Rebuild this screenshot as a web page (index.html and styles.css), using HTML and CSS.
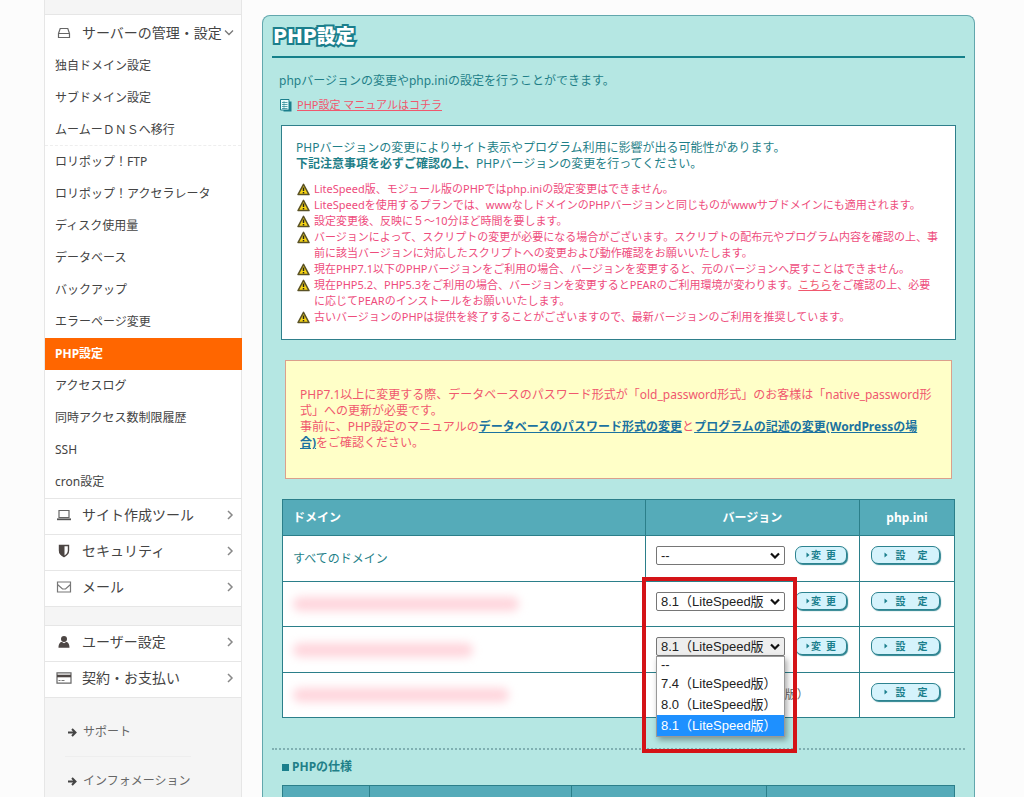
FILE: index.html
```html
<!DOCTYPE html>
<html lang="ja">
<head>
<meta charset="utf-8">
<title>PHP設定</title>
<link rel="stylesheet" href="styles.css">
</head>
<body>
<svg class="defs" aria-hidden="true">
  <symbol id="chev-right" viewBox="0 0 8 10"><path d="M2 1l4 4-4 4" fill="none" stroke="#888" stroke-width="1.5"/></symbol>
  <symbol id="chev-down" viewBox="0 0 10 7"><path d="M1 1.5l4 4 4-4" fill="none" stroke="currentColor" stroke-width="2.2"/></symbol>
  <symbol id="warn" viewBox="0 0 13 13"><path d="M6.5 1.4L12 11.6H1z" fill="#f7d514" stroke="#5a5226" stroke-width="1.5" stroke-linejoin="round"/><path d="M6.5 4.5v3.5" stroke="#222" stroke-width="1.5"/><path d="M6.5 9v1.4" stroke="#222" stroke-width="1.5"/></symbol>
  <symbol id="arrow" viewBox="0 0 9 9"><path d="M0 4.5h7M4 1l3.5 3.5L4 8" fill="none" stroke="#444" stroke-width="2"/></symbol>
  <symbol id="tri" viewBox="0 0 4 6"><path d="M0.5 0.5v5L3.5 3z" fill="#1b7f8c"/></symbol>
</svg>
<div class="layout">
  <nav class="side">
    <section class="group">
      <a class="head open" href="#"><svg class="ico" viewBox="0 0 16 14"><path d="M2.5 7.5L4.2 2.5h7.6l1.7 5v4h-11zM2.5 7.5h11" fill="none" stroke="#666" stroke-width="1.2"/></svg><span class="label">サーバーの管理・設定</span><svg class="down" viewBox="0 0 10 7"><path d="M1 1.5l4 4 4-4" fill="none" stroke="#777" stroke-width="1.3"/></svg></a>
      <ul class="sub">
        <li><a href="#">独自ドメイン設定</a></li>
        <li><a href="#">サブドメイン設定</a></li>
        <li><a href="#">ムームーＤＮＳへ移行</a></li>
        <li class="split"><a href="#">ロリポップ！FTP</a></li>
        <li><a href="#">ロリポップ！アクセラレータ</a></li>
        <li><a href="#">ディスク使用量</a></li>
        <li><a href="#">データベース</a></li>
        <li><a href="#">バックアップ</a></li>
        <li><a href="#">エラーページ変更</a></li>
        <li class="active"><a href="#">PHP設定</a></li>
        <li><a href="#">アクセスログ</a></li>
        <li><a href="#">同時アクセス数制限履歴</a></li>
        <li><a href="#">SSH</a></li>
        <li><a href="#">cron設定</a></li>
      </ul>
      <a class="head" href="#"><svg class="ico" viewBox="0 0 16 14"><path d="M3 2.5h10v7H3z" fill="none" stroke="#666" stroke-width="1.2"/><path d="M1 11.3h14" stroke="#555" stroke-width="1.8"/></svg><span class="label">サイト作成ツール</span><svg class="more"><use href="#chev-right"/></svg></a>
      <a class="head" href="#"><svg class="ico" viewBox="0 0 16 14"><path d="M3.5 1.5h9v5c0 3-2 4.8-4.5 6-2.5-1.2-4.5-3-4.5-6z" fill="#fff" stroke="#4d4644" stroke-width="1.4"/><path d="M3 1h5.5v12C5 11.5 3 9.5 3 6.5z" fill="#4d4644"/></svg><span class="label">セキュリティ</span><svg class="more"><use href="#chev-right"/></svg></a>
      <a class="head" href="#"><svg class="ico" viewBox="0 0 16 14"><path d="M1.5 2h13v10h-13zM1.5 4.5L6.500 9h3l5-4.5" fill="none" stroke="#777" stroke-width="1.2"/></svg><span class="label">メール</span><svg class="more"><use href="#chev-right"/></svg></a>
    </section>
    <section class="group">
      <a class="head" href="#"><svg class="ico" viewBox="0 0 16 14"><circle cx="8" cy="4" r="3" fill="#4d4644"/><path d="M2.5 12.8c0-4 1.5-5.8 3.5-5.8l2 1.2L10 7c2 0 3.5 1.8 3.5 5.8z" fill="#4d4644"/></svg><span class="label">ユーザー設定</span><svg class="more"><use href="#chev-right"/></svg></a>
      <a class="head" href="#"><svg class="ico" viewBox="0 0 16 14"><path d="M1 1.8h14v10.4H1z" fill="none" stroke="#666" stroke-width="1.2"/><path d="M1 5h14" stroke="#4d4644" stroke-width="2.6"/><path d="M2.5 9.5h2M5.5 9.5h3" stroke="#777"/></svg><span class="label">契約・お支払い</span><svg class="more"><use href="#chev-right"/></svg></a>
    </section>
    <ul class="extra">
      <li><a href="#"><svg><use href="#arrow"/></svg>サポート</a></li>
      <li><a href="#"><svg><use href="#arrow"/></svg>インフォメーション</a></li>
    </ul>
  </nav>

  <main class="panel">
    <h1>PHP設定</h1>
    <p class="intro">phpバージョンの変更やphp.iniの設定を行うことができます。</p>
    <p class="manual"><svg viewBox="0 0 12 13"><path d="M3.5 2.5h8v10h-8z" fill="#1b7f8c"/><path d="M.5.5h8.5v10.5H.5z" fill="#e9fbfb" stroke="#1b7f8c"/><path d="M2 3.5h5.5M2 5.5h5.5M2 7.5h5.5M2 9.5h5.5" stroke="#1b7f8c" stroke-width=".7"/><path d="M4 2v8" stroke="#1b7f8c" stroke-width=".5"/></svg><a href="#">PHP設定 マニュアルはコチラ</a></p>

    <section class="notice">
      <p>PHPバージョンの変更によりサイト表示やプログラム利用に影響が出る可能性があります。<br><strong>下記注意事項を必ずご確認の上、</strong>PHPバージョンの変更を行ってください。</p>
      <ul>
        <li><svg><use href="#warn"/></svg><span>LiteSpeed版、モジュール版のPHPではphp.iniの設定変更はできません。</span></li>
        <li><svg><use href="#warn"/></svg><span>LiteSpeedを使用するプランでは、wwwなしドメインのPHPバージョンと同じものがwwwサブドメインにも適用されます。</span></li>
        <li><svg><use href="#warn"/></svg><span>設定変更後、反映に５～10分ほど時間を要します。</span></li>
        <li><svg><use href="#warn"/></svg><span>バージョンによって、スクリプトの変更が必要になる場合がございます。スクリプトの配布元やプログラム内容を確認の上、事前に該当バージョンに対応したスクリプトへの変更および動作確認をお願いいたします。</span></li>
        <li><svg><use href="#warn"/></svg><span>現在PHP7.1以下のPHPバージョンをご利用の場合、バージョンを変更すると、元のバージョンへ戻すことはできません。</span></li>
        <li><svg><use href="#warn"/></svg><span>現在PHP5.2、PHP5.3をご利用の場合、バージョンを変更するとPEARのご利用環境が変わります。<a href="#">こちら</a>をご確認の上、必要に応じてPEARのインストールをお願いいたします。</span></li>
        <li><svg><use href="#warn"/></svg><span>古いバージョンのPHPは提供を終了することがございますので、最新バージョンのご利用を推奨しています。</span></li>
      </ul>
    </section>

    <p class="caution">PHP7.1以上に変更する際、データベースのパスワード形式が「old_password形式」のお客様は「native_password形式」への更新が必要です。<br>事前に、PHP設定のマニュアルの<a href="#">データベースのパスワード形式の変更</a>と<a href="#">プログラムの記述の変更(WordPressの場<br>合)</a>をご確認ください。</p>

    <table class="domains">
      <thead>
        <tr><th class="name">ドメイン</th><th class="ver">バージョン</th><th class="ini">php.ini</th></tr>
      </thead>
      <tbody>
        <tr>
          <td>すべてのドメイン</td>
          <td class="ctl"><div class="row"><div class="pick"><select aria-label="すべてのドメインのバージョン"><option>--</option></select><svg><use href="#chev-down"/></svg></div><button class="btn" type="button"><svg><use href="#tri"/></svg><span>変</span><span>更</span></button></div></td>
          <td class="ctl"><button class="btn wide" type="button"><svg><use href="#tri"/></svg><span>設</span><span>定</span></button></td>
        </tr>
        <tr>
          <td><span class="masked long"></span></td>
          <td class="ctl"><div class="row"><div class="pick"><select aria-label="バージョン"><option>8.1（LiteSpeed版）</option></select><svg><use href="#chev-down"/></svg><div class="frame"></div></div><button class="btn" type="button"><svg><use href="#tri"/></svg><span>変</span><span>更</span></button></div></td>
          <td class="ctl"><button class="btn wide" type="button"><svg><use href="#tri"/></svg><span>設</span><span>定</span></button></td>
        </tr>
        <tr>
          <td><span class="masked short"></span></td>
          <td class="ctl"><div class="row"><div class="pick expanded"><select aria-label="バージョン"><option>8.1（LiteSpeed版）</option></select><svg><use href="#chev-down"/></svg>
            <ul class="menu" role="listbox" aria-label="バージョン一覧"><li role="option">--</li><li role="option">7.4（LiteSpeed版）</li><li role="option">8.0（LiteSpeed版）</li><li role="option" aria-selected="true">8.1（LiteSpeed版）</li></ul></div><button class="btn" type="button"><svg><use href="#tri"/></svg><span>変</span><span>更</span></button></div></td>
          <td class="ctl"><button class="btn wide" type="button"><svg><use href="#tri"/></svg><span>設</span><span>定</span></button></td>
        </tr>
        <tr>
          <td><span class="masked mid"></span></td>
          <td class="fixed">8.1（LiteSpeed版）</td>
          <td class="ctl"><button class="btn wide" type="button"><svg><use href="#tri"/></svg><span>設</span><span>定</span></button></td>
        </tr>
      </tbody>
    </table>

    <hr>
    <h2>PHPの仕様</h2>
    <table class="spec">
      <colgroup><col class="c1"><col class="c2"><col class="c3"><col class="c4"></colgroup>
      <thead><tr><th></th><th></th><th></th><th></th></tr></thead>
    </table>
  </main>
</div>
</body>
</html>
```
FILE: styles.css
```css
* { box-sizing: border-box; }
body {
  margin: 0;
  background: #fcfcfc;
  color: #444;
  font: 12px/16px "Noto Sans", "Noto Sans CJK JP", sans-serif;
}
p, h1, h2, ul { margin: 0; padding: 0; }
ul { list-style: none; }
.defs { position: absolute; width: 0; height: 0; }
.layout {
  display: flex;
  gap: 20px;
  min-height: 100vh;
  padding: 0 49px 0 44px;
}

/* sidebar */
.side {
  flex: 0 0 198px;
  padding-top: 14px;
  background: #f5f5f5;
  border: solid #e6e6e6;
  border-width: 0 1px;
}
.side a { color: #444; text-decoration: none; }
.group { margin-bottom: 18px; background: #fff; border-top: 1px solid #e6e6e6; }
.group + .group { margin-bottom: 0; }
.head {
  display: flex;
  align-items: center;
  height: 36px;
  padding: 0 7px 3px 11px;
  border-bottom: 1px solid #e6e6e6;
  font-size: 14px;
}
.head.open { height: 35px; padding-bottom: 0; border: 0; }
.ico { width: 16px; height: 14px; margin-right: 10px; }
.label { flex: 1; white-space: nowrap; }
.more { width: 8px; height: 10px; }
.down { width: 10px; height: 7px; }
.sub { border-bottom: 1px solid #e6e6e6; }
.sub a { display: block; padding-left: 10px; line-height: 32px; }
.sub .split { border-top: 1px dashed #eee; margin-top: -1px; }
.sub .active { margin-right: -1px; background: #f60; }
.sub .active a { color: #fff; font-weight: bold; }
.extra { margin: 0 50px 0 20px; padding-top: 10px; }
.extra li { padding: 16px 0; }
.extra li + li { border-top: 1px solid #eee; }
.extra a { display: flex; align-items: center; gap: 6px; color: #666; white-space: nowrap; }
.extra svg { width: 9px; height: 9px; margin-left: 3px; }

/* content panel */
.panel {
  flex: 1;
  min-width: 0;
  margin-top: 15px;
  padding: 0 9px 30px;
  background: #b5e7e3;
  border: 1px solid #62a7ad;
  border-bottom: 0;
  border-radius: 8px 8px 0 0;
  color: #1f7f88;
}
h1 {
  padding: 10px 1px;
  border-bottom: 2px solid #14808a;
  color: #fff;
  font: 900 19px/20px "DejaVu Sans", "Noto Sans CJK JP", sans-serif;
  -webkit-text-stroke: 4px #1b7f8c;
  paint-order: stroke fill;
  stroke-linejoin: round;
}
.intro { margin: 15px 7px 8px; }
.manual { display: flex; align-items: center; gap: 5px; margin: 0 8px 12px; font-size: 11px; }
.manual svg { width: 12px; height: 13px; }
.panel a { color: #f0586e; }

.notice {
  margin: 0 9px 20px;
  padding: 14px 14px 14px;
  background: #fff;
  border: 1px solid #2f7f8b;
}
.notice ul { margin-top: 9px; color: #ee4c7c; font-size: 11px; }
.notice li { display: flex; gap: 4px; }
.notice svg { flex: none; width: 13px; height: 13px; margin: 2px 0 0 1px; }

.panel .caution {
  margin: 0 13px 20px;
  padding: 26px 14px 27px;
  background: #ffffc8;
  border: 1px solid #dba08c;
  color: #f0586e;
}
.caution a { color: #1b72a0; font-weight: bold; }

/* tables */
table { width: calc(100% - 20px); margin: 0 10px; border-collapse: collapse; table-layout: fixed; }
th, td { border: 1px solid #2b7f8a; }
th { height: 36px; padding: 0 10px; background: #55abb9; color: #fff; font-weight: bold; }
.name { text-align: left; }
.ver { width: 214px; }
.ini { width: 95px; }
td { height: 45px; padding: 0 10px; background: #fff; }
tbody tr:nth-child(odd) td { height: 46px; }
.ctl { padding-top: 10px; vertical-align: top; }
.fixed { padding-left: 14px; text-align: center; color: #666; }
.row { display: flex; gap: 10px; }
.masked { display: block; height: 14px; background: #ffd5dc; border-radius: 7px; filter: blur(5px); }
.long { width: 226px; }
.short { width: 180px; }
.mid { width: 216px; }

.pick { position: relative; width: 129px; height: 19px; }
.pick select {
  display: block;
  width: 100%;
  height: 19px;
  padding: 0 20px 0 4px;
  appearance: none;
  background: #fff;
  border: 1px solid #767676;
  border-radius: 2px;
  color: #222;
  font: 13px/17px "Liberation Sans", "Noto Sans CJK JP", sans-serif;
}
.pick.expanded select { background: #eee; }
.pick > svg { position: absolute; top: 6px; right: 5px; width: 10px; height: 7px; color: #111; pointer-events: none; }
.menu {
  position: absolute;
  z-index: 2;
  top: 19px;
  left: 0;
  width: 129px;
  background: #fff;
  border: 1px solid #999;
  box-shadow: 2px 3px 6px rgba(0, 0, 0, .35);
  color: #222;
  font: 13px/21px "Liberation Sans", "Noto Sans CJK JP", sans-serif;
}
.menu li { padding-left: 4px; white-space: nowrap; }
.menu li:first-child { line-height: 16px; }
.menu [aria-selected] { background: #1e90ff; color: #fff; }
.frame {
  position: absolute;
  z-index: 3;
  top: -15px;
  left: -14px;
  width: 155px;
  height: 176px;
  border: 4px solid #d41317;
  pointer-events: none;
}

.btn {
  display: flex;
  align-items: center;
  justify-content: center;
  gap: 5px;
  width: 52px;
  height: 18px;
  padding: 0;
  background: #d5f3fc;
  border: 1px solid #2c8390;
  border-radius: 7px;
  box-shadow: 1px 1px 1px #2c8390;
  color: #1b7f8c;
  font: bold 10px/16px "Noto Sans CJK JP", sans-serif;
}
.btn svg { width: 4px; height: 6px; margin-right: -4px; }
.btn.wide { gap: 12px; width: 69px; margin-left: 1px; }

hr { margin: 30px 0 9px; border: 0; border-top: 2px dotted #7fb0b2; }
h2 { display: flex; align-items: center; gap: 3px; margin: 0 10px 10px; font-size: 12px; line-height: 16px; }
h2::before { content: ""; width: 7px; height: 7px; background: #1b7f8c; }
.c1 { width: 13%; }
.c2 { width: 30%; }
.c3 { width: 29%; }
.c4 { width: 28%; }
```
